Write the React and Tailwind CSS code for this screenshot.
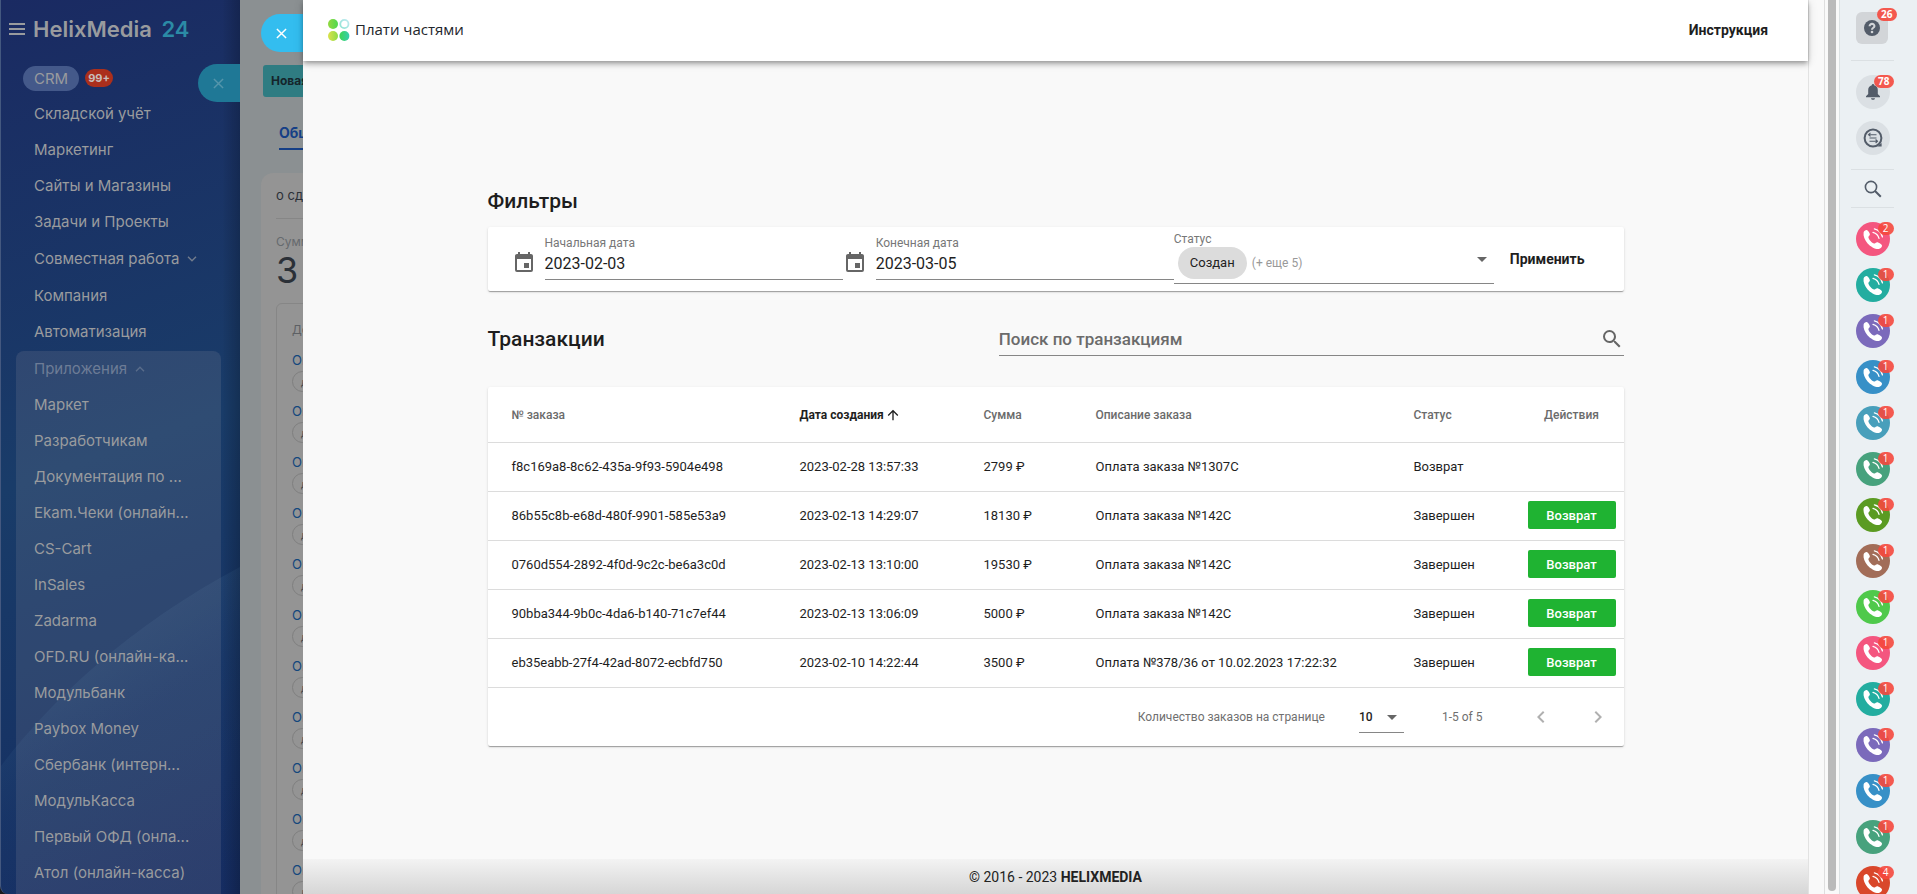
import { useState } from "react";

const MENU = [
  "Складской учёт",
  "Маркетинг",
  "Сайты и Магазины",
  "Задачи и Проекты",
];

const APPS = [
  "Маркет",
  "Разработчикам",
  "Документация по ...",
  "Ekam.Чеки (онлайн...",
  "CS-Cart",
  "InSales",
  "Zadarma",
  "OFD.RU (онлайн-ка...",
  "Модульбанк",
  "Paybox Money",
  "Сбербанк (интерн...",
  "МодульКасса",
  "Первый ОФД (онла...",
  "Атол (онлайн-касса)",
];

const ORDERS = [
  { id: "f8c169a8-8c62-435a-9f93-5904e498", date: "2023-02-28 13:57:33", sum: "2799 ₽", text: "Оплата заказа №1307С", status: "Возврат" },
  { id: "86b55c8b-e68d-480f-9901-585e53a9", date: "2023-02-13 14:29:07", sum: "18130 ₽", text: "Оплата заказа №142С", status: "Завершен" },
  { id: "0760d554-2892-4f0d-9c2c-be6a3c0d", date: "2023-02-13 13:10:00", sum: "19530 ₽", text: "Оплата заказа №142С", status: "Завершен" },
  { id: "90bba344-9b0c-4da6-b140-71c7ef44", date: "2023-02-13 13:06:09", sum: "5000 ₽", text: "Оплата заказа №142С", status: "Завершен" },
  { id: "eb35eabb-27f4-42ad-8072-ecbfd750", date: "2023-02-10 14:22:44", sum: "3500 ₽", text: "Оплата №378/36 от 10.02.2023 17:22:32", status: "Завершен" },
];

const CALLS = [
  { bg: "bg-[#f4567f]", count: 2 },
  { bg: "bg-[#23ada0]", count: 1 },
  { bg: "bg-[#7b6abb]", count: 1 },
  { bg: "bg-[#3790c7]", count: 1 },
  { bg: "bg-[#489fbb]", count: 1 },
  { bg: "bg-[#47a27d]", count: 1 },
  { bg: "bg-[#5b9b22]", count: 1 },
  { bg: "bg-[#a26d58]", count: 1 },
  { bg: "bg-[#4fc94b]", count: 1 },
  { bg: "bg-[#f4567f]", count: 1 },
  { bg: "bg-[#23ada0]", count: 1 },
  { bg: "bg-[#7b6abb]", count: 1 },
  { bg: "bg-[#3790c7]", count: 1 },
  { bg: "bg-[#47a27d]", count: 1 },
  { bg: "bg-[#d9472b]", count: 4 },
];

const ICONS = {
  calendar:
    "M19,19H5V8H19M16,1V3H8V1H6V3H5C3.89,3 3,3.89 3,5V19A2,2 0 0,0 5,21H19A2,2 0 0,0 21,19V5C21,3.89 20.1,3 19,3H18V1M17,12H12V17H17V12Z",
  search:
    "M9.5,3A6.5,6.5 0 0,1 16,9.5C16,11.11 15.41,12.59 14.44,13.73L14.71,14H15.5L20.5,19L19,20.5L14,15.5V14.71L13.73,14.44C12.59,15.41 11.11,16 9.5,16A6.5,6.5 0 0,1 3,9.5A6.5,6.5 0 0,1 9.5,3M9.5,5C7,5 5,7 5,9.5C5,12 7,14 9.5,14C12,14 14,12 14,9.5C14,7 12,5 9.5,5Z",
  down: "M7,10L12,15L17,10H7Z",
  up: "M13,20H11V8L5.5,13.5L4.08,12.08L12,4.16L19.92,12.08L18.5,13.5L13,8V20Z",
  left: "M15.41,16.58L10.83,12L15.41,7.41L14,6L8,12L14,18L15.41,16.58Z",
  right: "M8.59,16.58L13.17,12L8.59,7.41L10,6L16,12L10,18L8.59,16.58Z",
};

function Icon({ name, className }) {
  return (
    <svg viewBox="0 0 24 24" fill="currentColor" className={className} aria-hidden>
      <path d={ICONS[name]} />
    </svg>
  );
}

function Cross({ className }) {
  return (
    <svg viewBox="0 0 12 12" fill="none" stroke="currentColor" strokeWidth="1.6" className={className} aria-hidden>
      <path d="M1 1 L11 11 M11 1 L1 11" />
    </svg>
  );
}

function Chevron({ up }) {
  return (
    <svg viewBox="0 0 10 6" fill="none" stroke="currentColor" strokeWidth="1.4" className="w-[10px] h-[6px] opacity-70" aria-hidden>
      <path d={up ? "M1 5.2 L5 1.2 L9 5.2" : "M1 0.8 L5 4.8 L9 0.8"} />
    </svg>
  );
}

function MenuLink({ children, className = "h-9 pl-[34px]" }) {
  return (
    <a href="#" className={`flex items-center gap-2 whitespace-nowrap ${className}`}>
      {children}
    </a>
  );
}

function Sidebar() {
  return (
    <aside className="relative w-60 shrink-0 overflow-hidden border-l border-[#44587f] rounded-bl-lg bg-linear-160 from-[#1a2a62] via-[#193c69] to-[#152c61] font-[Inter,sans-serif] text-[15px] text-[#999b9e]">
      {/* Фоновая волна */}
      <svg viewBox="0 0 240 894" preserveAspectRatio="none" className="absolute inset-0 w-full h-full" aria-hidden>
        <defs>
          <linearGradient id="wave" x1="0.3" y1="0" x2="0.8" y2="1">
            <stop offset="0" stopColor="#6fa0b8" stopOpacity="0.2" />
            <stop offset="0.5" stopColor="#2f5f90" stopOpacity="0.08" />
            <stop offset="1" stopColor="#152d66" stopOpacity="0.1" />
          </linearGradient>
          <linearGradient id="edge" x1="0" y1="0" x2="1" y2="0">
            <stop offset="0" stopColor="#000" stopOpacity="0" />
            <stop offset="1" stopColor="#000" stopOpacity="0.2" />
          </linearGradient>
        </defs>
        <path d="M0 766 C50 700 130 625 240 567 V894 H0 Z" fill="url(#wave)" />
        <rect x="222" width="18" height="894" fill="url(#edge)" />
      </svg>

      <div className="relative flex h-[58px] items-center gap-2 pl-2">
        <button aria-label="Меню" className="flex flex-col gap-[3px]">
          <span className="h-[2px] w-4 bg-current" />
          <span className="h-[2px] w-4 bg-current" />
          <span className="h-[2px] w-4 bg-current" />
        </button>
        <span className="text-[22px] font-semibold">
          HelixMedia <span className="ml-1 text-[#2b8ba6]">24</span>
        </span>
      </div>

      <nav className="relative -ml-px pt-[2px]">
        <a href="#" className="flex h-9 items-center gap-[6px] pl-[23px]">
          <span className="rounded-full bg-[#44598a] px-[11px] leading-[25px]">CRM</span>
          <span className="rounded-full bg-[#ab2f1c] px-[3px] text-[11px] font-bold leading-[18px] text-[#c9bdbb]">99+</span>
        </a>
        {MENU.map((item) => (
          <MenuLink key={item}>{item}</MenuLink>
        ))}
        <MenuLink className="h-[38px] pl-[34px]">
          Совместная работа <Chevron />
        </MenuLink>
        <MenuLink>Компания</MenuLink>
        <MenuLink>Автоматизация</MenuLink>
        <div className="mt-px ml-4 mr-[19px] rounded-t-lg bg-[#c8b8b8]/13 pb-6">
          <MenuLink className="h-9 pl-[18px] text-[#6d7c96]">
            Приложения <Chevron up />
          </MenuLink>
          {APPS.map((item) => (
            <MenuLink key={item} className="h-9 pl-[18px]">{item}</MenuLink>
          ))}
        </div>
      </nav>

      <button aria-label="Закрыть" className="absolute right-0 top-16 flex h-[38px] w-[42px] items-center rounded-l-full bg-[#1f7896] pl-[15px] text-[#5495ab]">
        <Cross className="size-[11px]" />
      </button>
    </aside>
  );
}

// Карточка сделки, видна только левым краем из-под слайдера
function DealStrip() {
  return (
    <section className="relative w-[63px] shrink-0 overflow-hidden whitespace-nowrap bg-[#8b9092] font-[Inter,sans-serif] text-[#2b3037]">
      <div className="pl-[23px] pt-[65px]">
        <button className="h-8 rounded-l-[3px] bg-[#2f7c82] px-2 text-xs font-bold text-[#15252b]">Новая</button>
      </div>
      <div className="pl-[39px] pt-[23px]">
        <a href="#" className="inline-block border-b-2 border-[#153f86] pb-[5px] text-sm font-bold leading-[21px] text-[#153f86]">Общие</a>
      </div>
      <div className="ml-[21px] mt-[23px] h-[760px] w-40 rounded-tl-xl bg-[#949494] pl-[15px]">
        <div className="h-[46px] border-b border-[#868686] text-[13px] leading-[44px]">о сделке</div>
        <div className="pt-[15px] text-xs leading-4 text-[#666a6e]">Сумма</div>
        <div className="text-4xl leading-10">3</div>
        <div className="mt-[13px] h-[700px] rounded-tl-md border border-[#868686] pl-[15px]">
          <div className="pt-4 text-xs leading-5 text-[#5d6064]">Договор</div>
          {Array.from({ length: 11 }, (_, i) => (
            <div key={i} className="h-[51px] pt-3">
              <a href="#" className="block text-[13px] leading-4 text-[#13477d]">Оплата</a>
              <span className="mt-[3px] block h-[21px] w-16 rounded-full border border-[#7f7f7f] pl-2 text-[10px] leading-[20px] text-[#46494d]">дело</span>
            </div>
          ))}
        </div>
      </div>
      <button aria-label="Закрыть слайдер" className="absolute right-0 top-[14px] flex h-[38px] w-[42px] items-center rounded-l-full bg-[#33bdef] pl-[15px] text-white">
        <Cross className="size-[11px]" />
      </button>
    </section>
  );
}

function Logo() {
  return (
    <svg viewBox="0 0 22 22" className="size-[22px]" aria-hidden>
      <defs>
        <linearGradient id="g1" x1="0" y1="0" x2="1" y2="0">
          <stop offset="0" stopColor="#93d93f" />
          <stop offset="1" stopColor="#4fd850" />
        </linearGradient>
        <linearGradient id="g2" x1="0" y1="0" x2="1" y2="0">
          <stop offset="0" stopColor="#dbe14b" />
          <stop offset="1" stopColor="#8fdc45" />
        </linearGradient>
        <linearGradient id="g3" x1="0" y1="0" x2="1" y2="0">
          <stop offset="0" stopColor="#3ed653" />
          <stop offset="1" stopColor="#35cdb0" />
        </linearGradient>
        <linearGradient id="g4" x1="0" y1="1" x2="1" y2="0">
          <stop offset="0" stopColor="#8fe3d3" />
          <stop offset="1" stopColor="#bfeaf0" />
        </linearGradient>
      </defs>
      <circle cx="5" cy="5" r="5" fill="url(#g1)" />
      <circle cx="16.4" cy="5" r="4.1" fill="none" stroke="url(#g4)" strokeWidth="1.8" />
      <circle cx="5" cy="17" r="5" fill="url(#g2)" />
      <circle cx="16.4" cy="17" r="5" fill="url(#g3)" />
    </svg>
  );
}

function DateField({ id, label, value, onChange }) {
  return (
    <div className="flex flex-1 items-end">
      <Icon name="calendar" className="mb-[5px] mr-[9px] size-6 text-[#666]" />
      <div className="flex flex-1 flex-col border-b border-[#868686]">
        <label htmlFor={id} className="text-xs leading-4 text-[#777]">{label}</label>
        <input
          id={id}
          value={value}
          onChange={(e) => onChange(e.target.value)}
          className="h-7 w-full pb-[2px] text-base text-[#1e1e1e] outline-none"
        />
      </div>
    </div>
  );
}

function Filters() {
  const [from, setFrom] = useState("2023-02-03");
  const [to, setTo] = useState("2023-03-05");

  return (
    <form className="flex h-16 rounded-xs bg-white pl-6 pr-[23px] shadow-[0_2px_1px_-1px_rgba(0,0,0,.2),0_1px_1px_rgba(0,0,0,.14),0_1px_3px_rgba(0,0,0,.12)]">
      <div className="flex flex-[2] pb-[11px]">
        <DateField id="date-from" label="Начальная дата" value={from} onChange={setFrom} />
        <DateField id="date-to" label="Конечная дата" value={to} onChange={setTo} />
      </div>
      <div className="mb-[7px] flex w-80 flex-col border-b border-[#868686] pt-1">
        <label htmlFor="status" className="text-xs leading-4 text-[#777]">Статус</label>
        <div className="flex items-center">
          <select id="status" className="ml-1 h-8 appearance-none rounded-full bg-[#dcdcdc] px-3 text-[13px] text-[#222] outline-none">
            <option>Создан</option>
          </select>
          <span className="ml-[5px] flex-1 text-xs text-[#999]">(+ еще 5)</span>
          <Icon name="down" className="mb-2 size-6 text-[#666]" />
        </div>
      </div>
      <button type="button" className="pl-4 pr-4 text-sm font-bold text-[#1e1e1e]">Применить</button>
    </form>
  );
}

function OrdersTable() {
  return (
    <div className="rounded-xs bg-white shadow-[0_2px_1px_-1px_rgba(0,0,0,.2),0_1px_1px_rgba(0,0,0,.14),0_1px_3px_rgba(0,0,0,.12)]">
      <table className="w-full table-fixed text-left text-[13px] text-[#1e1e1e]">
        <colgroup>
          <col className="w-[288px]" />
          <col className="w-[184px]" />
          <col className="w-[112px]" />
          <col />
          <col className="w-[130px]" />
          <col className="w-[104px]" />
        </colgroup>
        <thead className="text-xs text-[#6b6b6b]">
          <tr className="h-14 border-b border-[#dcdcdc]">
            <th className="px-6 font-medium">№ заказа</th>
            <th className="px-6 font-bold text-[#1e1e1e]">
              <button className="flex items-center gap-px whitespace-nowrap">
                Дата создания <Icon name="up" className="size-4" />
              </button>
            </th>
            <th className="px-6 font-medium">Сумма</th>
            <th className="px-6 font-medium">Описание заказа</th>
            <th className="px-6 font-medium">Статус</th>
            <th className="text-center font-medium">Действия</th>
          </tr>
        </thead>
        <tbody>
          {ORDERS.map((order) => (
            <tr key={order.id} className="h-[49px] border-b border-[#dcdcdc]">
              <td className="px-6 pb-[2px]">{order.id}</td>
              <td className="px-6 pb-[2px]">{order.date}</td>
              <td className="px-6 pb-[2px]">{order.sum}</td>
              <td className="px-6 pb-[2px]">{order.text}</td>
              <td className="px-6 pb-[2px]">{order.status}</td>
              <td className="px-2 pb-[2px]">
                {order.status === "Завершен" && (
                  <button className="block h-7 w-full rounded-xs bg-[#1fb332] text-[13px] font-medium text-white">Возврат</button>
                )}
              </td>
            </tr>
          ))}
        </tbody>
      </table>
      <div className="flex h-[58px] items-center justify-end pr-[14px] text-xs text-[#6f6f6f]">
        <label htmlFor="page-size">Количество заказов на странице</label>
        <div className="ml-[34px] mr-[38px] flex h-8 w-[45px] items-center justify-between border-b border-[#868686]">
          <select id="page-size" className="w-6 appearance-none text-xs font-medium text-[#1e1e1e] outline-none">
            <option>10</option>
          </select>
          <Icon name="down" className="size-6 shrink-0 text-[#666]" />
        </div>
        <span>1-5 of 5</span>
        <button aria-label="Назад" className="ml-[46px] text-[#b0b0b0]"><Icon name="left" className="size-6" /></button>
        <button aria-label="Вперёд" className="ml-[33px] text-[#b0b0b0]"><Icon name="right" className="size-6" /></button>
      </div>
    </div>
  );
}

function Slider() {
  return (
    <div className="flex min-w-0 flex-1 flex-col border-r border-[#e2e2e2] bg-[#f9f9f9] font-[Roboto,sans-serif]">
      <header className="z-10 flex h-[61px] shrink-0 items-center justify-between bg-white pl-[25px] pr-10 pb-[2px] shadow-[0_2px_4px_-1px_rgba(0,0,0,.25),0_4px_5px_rgba(0,0,0,.16),0_1px_10px_rgba(0,0,0,.12)]">
        <div className="flex items-center gap-[5px]">
          <Logo />
          <span className="font-['Open_Sans',sans-serif] text-[15px] font-medium text-[#22262b]">Плати частями</span>
        </div>
        <a href="#" className="text-sm font-bold text-[#1e1e1e]">Инструкция</a>
      </header>

      <main className="mx-auto flex w-full max-w-[1136px] flex-1 flex-col justify-center pt-[13px] text-[#1e1e1e]">
        <h2 className="mb-3 text-[21px] font-medium leading-7">Фильтры</h2>
        <Filters />
        <div className="mb-[31px] mt-7 flex items-end justify-between">
          <h2 className="text-[21px] font-medium">Транзакции</h2>
          <div className="flex h-[37px] w-[55%] items-end border-b border-[#868686]">
            <input
              type="search"
              aria-label="Поиск по транзакциям"
              placeholder="Поиск по транзакциям"
              className="h-8 flex-1 text-[17px] font-medium outline-none placeholder:text-[#6b6b6b]"
            />
            <Icon name="search" className="mb-1 size-6 text-[#666]" />
          </div>
        </div>
        <OrdersTable />
      </main>

      <footer className="flex h-[35px] shrink-0 items-center justify-center bg-linear-to-b from-[#f3f3f3] to-[#d6d6d6] text-sm text-[#222]">
        <span>© 2016 - 2023 <b>HELIXMEDIA</b></span>
      </footer>
    </div>
  );
}

function Badge({ children, className = "right-[-4px] top-0" }) {
  return (
    <span className={`absolute min-w-4 rounded-full bg-[#f5483d]/90 px-1 text-center text-[10px] leading-[13px] text-white ${className}`}>
      {children}
    </span>
  );
}

function RightRail() {
  return (
    <aside className="flex w-[78px] shrink-0 flex-col items-center overflow-hidden border-l border-[#dbe1e3] bg-[#ebf0f3] pr-3 font-['Open_Sans',sans-serif] text-[#535c69]">
      <button aria-label="Помощь" className="relative mr-[2px] mt-3 flex size-8 shrink-0 items-center justify-center rounded-md bg-[#d2d5d8]">
        <svg viewBox="0 0 16 16" className="size-4" aria-hidden>
          <circle cx="8" cy="8" r="8" fill="#535c69" />
          <path d="M5.6 6.3 C5.6 3 10.6 3.2 10.4 6.2 C10.3 7.8 8.1 7.7 8 9.7" fill="none" stroke="#d2d5d8" strokeWidth="2.1" />
          <circle cx="8" cy="12" r="1.3" fill="#d2d5d8" />
        </svg>
        <Badge className="right-[-9px] top-[-4px] font-bold">26</Badge>
      </button>
      <hr className="mb-[14px] mt-4 w-[43px] border-[#dbe0e3]" />
      <button aria-label="Уведомления" className="relative flex size-[34px] shrink-0 items-center justify-center rounded-full bg-[#dbe0e4]">
        <svg viewBox="0 0 14 16" fill="currentColor" className="h-4 w-[14px]" aria-hidden>
          <path d="M7 0 C7.8 0 8.2 .6 8.2 1.3 C10.6 1.9 11.8 3.7 11.8 6 V10 L14 12.2 V13.3 H0 V12.2 L2.2 10 V6 C2.2 3.7 3.4 1.9 5.8 1.3 C5.8 .6 6.2 0 7 0 Z M5 14.2 H9 C8.8 16.4 5.2 16.4 5 14.2 Z" />
        </svg>
        <Badge className="right-[-4px] top-0 font-bold">78</Badge>
      </button>
      <button aria-label="Чат" className="mt-3 flex size-[34px] shrink-0 items-center justify-center rounded-full bg-[#dbe0e4]">
        <svg viewBox="0 0 20 20" fill="none" stroke="currentColor" className="size-5" aria-hidden>
          <circle cx="10" cy="10" r="8.4" strokeWidth="2" />
          <path d="M14 18.6 H18.6 V15 Z" fill="currentColor" stroke="none" />
          <path d="M5.5 6.7 H13.5 M7.5 4.8 L5.5 6.7 L7.5 8.4 M6.5 10 H13.5 M6.5 13.3 H14.5 M12.6 11.5 L14.5 13.3 L12.6 15" strokeWidth="1.1" />
        </svg>
      </button>
      <hr className="mt-[14px] w-[43px] border-[#dbe0e3]" />
      <button aria-label="Поиск" className="flex h-[37px] shrink-0 items-center">
        <svg viewBox="0 0 18 18" fill="none" stroke="currentColor" className="size-[18px]" aria-hidden>
          <circle cx="7" cy="7" r="5.6" strokeWidth="1.6" />
          <path d="M10.8 10.8 L16.8 16.8" strokeWidth="2" />
        </svg>
      </button>
      <hr className="mb-[14px] w-[43px] border-[#dbe0e3]" />
      <div className="flex flex-col gap-3">
        {CALLS.map((call, i) => (
          <button key={i} aria-label="Звонок" className={`relative flex size-[34px] shrink-0 items-center justify-center rounded-full ${call.bg}`}>
            <svg viewBox="0 0 20 22" className="h-[22px] w-5" aria-hidden>
              <path
                d="M.6 4.6 C.9 3 2.8 1.8 4.2 2.2 C5.4 2.6 7 5.4 6.9 6.6 C6.8 7.8 5.2 8.2 5.4 9.4 C5.9 11.6 8.8 14.8 11.2 15.5 C12.5 15.8 13 14.2 14.3 14.3 C15.6 14.4 18.8 16.4 19 17.5 C19.2 19 17.4 20.8 15.8 21 C12.4 21.4 7.6 18.6 4.6 15.4 C1.8 12.4 0 8 .6 4.6 Z"
                fill="#fff"
              />
              <path d="M11.4 .8 C15.4 1.8 18.4 4.8 19.4 8.8 M10 4.4 C13 5.2 15.2 7.4 16 10.4" fill="none" stroke="#fff" strokeWidth="1.3" strokeLinecap="round" />
            </svg>
            <Badge>{call.count}</Badge>
          </button>
        ))}
      </div>
    </aside>
  );
}

export default function App() {
  return (
    <div className="flex h-screen overflow-hidden bg-[#1a1a1f]">
      <Sidebar />
      <DealStrip />
      <Slider />
      <div className="flex w-[30px] shrink-0 justify-between bg-[#f9f9f9]">
        <div className="w-4 border-r border-[#dedede]" />
        <div className="mb-[3px] mr-[3px] w-2 rounded-b-full bg-[#bababa]" />
      </div>
      <RightRail />
    </div>
  );
}
